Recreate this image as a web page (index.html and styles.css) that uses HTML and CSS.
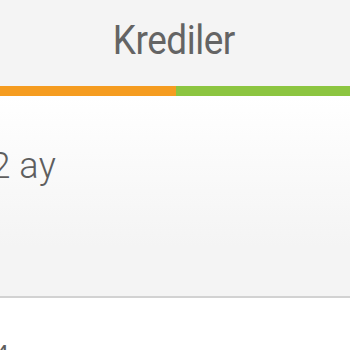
FILE: index.html
```html
<!DOCTYPE html>
<html>
<head>
<meta charset="utf-8">
<link rel="stylesheet" href="styles.css">
</head>
<body>
<header class="header">
  <h1 class="title">Krediler</h1>
</header>
<div class="stripe">
  <div class="stripe-orange"></div>
  <div class="stripe-green"></div>
</div>
<section class="card">
  <div class="term">12 ay</div>
</section>
<section class="card next">
  <div class="term">24 ay</div>
</section>
</body>
</html>
```
FILE: styles.css
```css
html, body {
  margin: 0;
  padding: 0;
  background: #ffffff;
  overflow: hidden;
  width: 350px;
  height: 350px;
}
body {
  font-family: Roboto, "Liberation Sans", sans-serif;
  color: #666666;
}
.header {
  height: 86px;
  background: #f4f4f4;
  display: flex;
  justify-content: center;
  align-items: flex-start;
}
.title {
  margin: 0;
  padding-top: 16px;
  font-weight: 400;
  font-size: 41px;
  line-height: 48px;
  color: #646464;
  letter-spacing: -0.5px;
  transform: scaleX(0.9);
  margin-left: -2px;
}
.stripe {
  display: flex;
  height: 10px;
}
.stripe-orange {
  width: 176px;
  background: #f59c20;
}
.stripe-green {
  flex: 1;
  background: #8cc540;
}
.card {
  height: 200px;
  background: linear-gradient(to bottom, #ffffff 0%, #f4f4f4 75%, #f4f4f4 100%);
  border-bottom: 2px solid #d2d2d2;
}
.term {
  padding-top: 49px;
  margin-left: -30px;
  font-size: 36px;
  line-height: 42px;
  font-weight: 300;
  color: #5e5e5e;
  letter-spacing: 0.5px;
  word-spacing: -1px;
}
.card.next {
  background: #ffffff;
  border-bottom: none;
}
.card.next .term {
  padding-top: 40px;
}
```
